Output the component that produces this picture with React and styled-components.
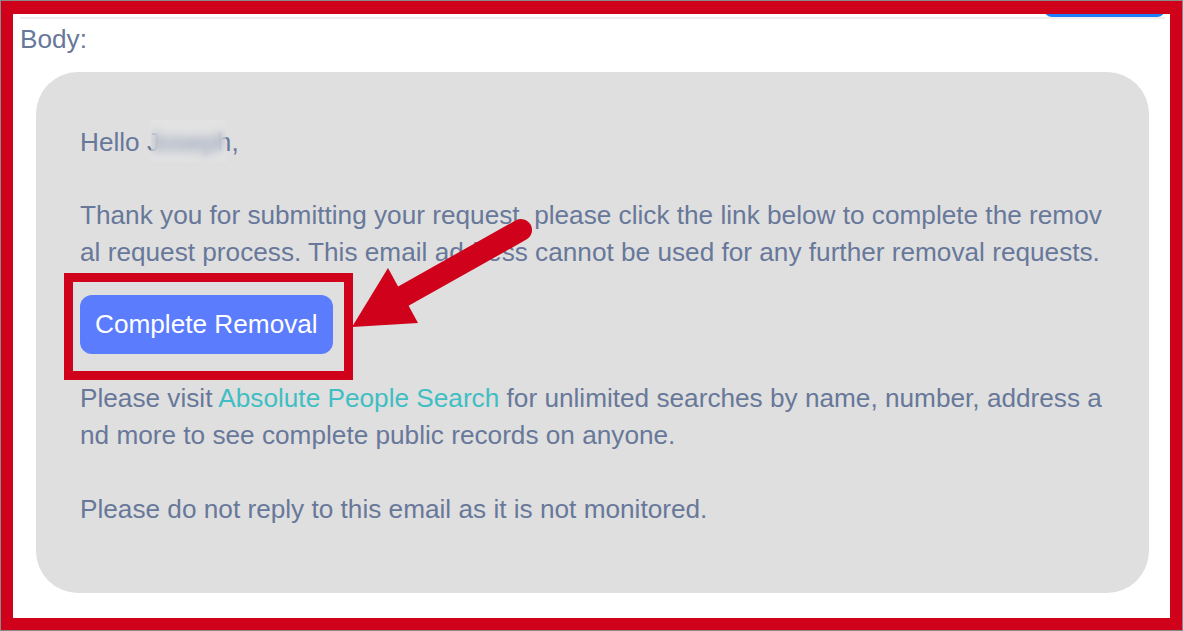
import React from "react";
import styled, { createGlobalStyle } from "styled-components";

const Global = createGlobalStyle`
  html, body { margin: 0; padding: 0; background: #fff; }
  body { font-family: "Liberation Sans", Arial, sans-serif; }
  * { box-sizing: border-box; }
`;

const RED = "#d0021b";
const TEXT = "#68789a";

const Screen = styled.div`
  position: relative;
  width: 1183px;
  height: 631px;
  border: 1px solid #8a8a8a;
  overflow: hidden;
`;

const Frame = styled.div`
  height: 100%;
  border: 12px solid ${RED};
  border-top-width: 13px;
  background: #fff;
  display: flex;
  flex-direction: column;
`;

const Toolbar = styled.div`
  height: 5px;
  margin: 0 5px 0 7px;
  border-bottom: 2px solid #eeeeee;
  display: flex;
  justify-content: flex-end;
  align-items: flex-end;
  overflow: hidden;
`;

const SendButton = styled.div`
  width: 121px;
  height: 20px;
  background: #1b7ffc;
  border-radius: 8px;
`;

const Label = styled.div`
  padding: 1.5px 0 0 7px;
  font-size: 26.2px;
  line-height: 36.5px;
  color: ${TEXT};
`;

const Card = styled.div`
  margin: 14.5px 21px 0 23px;
  padding: 52.5px 38px 65px 44px;
  background: #dfdfdf;
  border-radius: 42px;
  font-size: 26.2px;
  line-height: 36.5px;
  color: ${TEXT};
  word-break: break-all;
`;

const Para = styled.p`
  margin: 0 0 ${(p) => p.$gap ?? 36.5}px 0;
  &:last-child { margin-bottom: 0; }
`;

const Name = styled.span`
  position: relative;
  &::after {
    content: "";
    position: absolute;
    left: 4px;
    right: 5.5px;
    top: -7px;
    bottom: -5px;
    backdrop-filter: blur(5px);
    -webkit-backdrop-filter: blur(5px);
    background: rgba(235, 235, 240, 0.25);
  }
`;

const Link = styled.a`
  color: #3fbec3;
  text-decoration: none;
`;

const ButtonRow = styled.div`
  margin: 24.8px 0 26.5px 0;
  display: flex;
`;

const ActionButton = styled.button`
  height: 59px;
  padding: 0 15px;
  border: none;
  border-radius: 12px;
  background: #5b7cfd;
  color: #ffffff;
  font-family: "Liberation Sans", Arial, sans-serif;
  font-size: 26.2px;
  line-height: 59px;
  cursor: pointer;
`;

const Overlay = styled.svg`
  position: absolute;
  left: -1px;
  top: -1px;
  width: 1183px;
  height: 631px;
  pointer-events: none;
`;

export default function App() {
  return (
    <>
      <Global />
      <Screen>
        <Frame>
          <Toolbar>
            <SendButton />
          </Toolbar>
          <Label>Body:</Label>
          <Card>
            <Para>
              Hello <Name>Joseph</Name>,
            </Para>
            <Para $gap={0}>
              Thank you for submitting your request, please click the link below to complete the removal request process. This email address cannot be used for any further removal requests.
            </Para>
            <ButtonRow>
              <ActionButton>Complete Removal</ActionButton>
            </ButtonRow>
            <Para $gap={38}>
              Please visit <Link href="#">Absolute People Search</Link> for unlimited searches by name, number, address and more to see complete public records on anyone.
            </Para>
            <Para>Please do not reply to this email as it is not monitored.</Para>
          </Card>
        </Frame>
        <Overlay viewBox="0 0 1183 631">
          <rect x="68.5" y="277.5" width="280" height="98" fill="none" stroke={RED} strokeWidth="9" />
          <line x1="521" y1="230" x2="400" y2="298" stroke={RED} strokeWidth="22" strokeLinecap="round" />
          <polygon points="352,327 388,268 418,323" fill={RED} />
        </Overlay>
      </Screen>
    </>
  );
}
